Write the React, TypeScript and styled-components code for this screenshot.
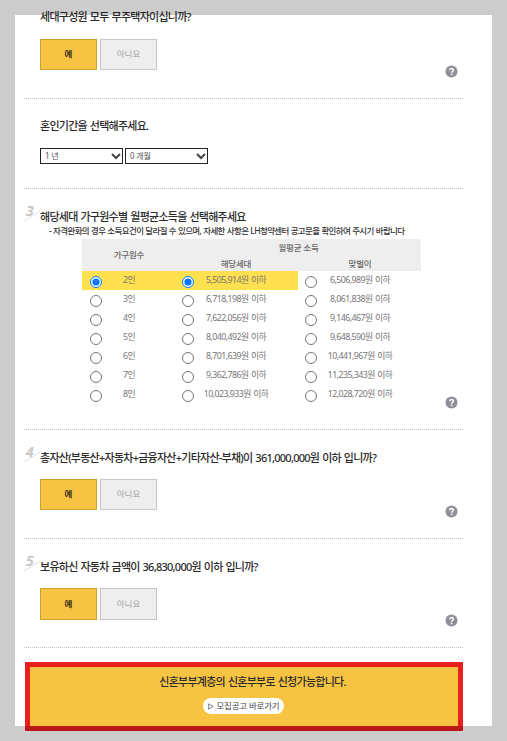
import React, { useState } from "react";
import styled, { createGlobalStyle } from "styled-components";

const GlobalStyle = createGlobalStyle`
  * { box-sizing: border-box; }
  body { margin: 0; background: #fff; }
  button, select, input { font: inherit; margin: 0; }
`;

const Page = styled.main`
  position: relative;
  width: 507px;
  height: 741px;
  overflow: hidden;
  background: #fff;
  padding: 0 44px 0 24px;
  font-family: "Noto Sans", "Noto Sans CJK KR", sans-serif;
  color: #222;
`;

/* Translucent frame laid over the edges of the page. */
const Frame = styled.div`
  position: absolute;
  inset: 0;
  border: 15px solid rgba(0, 0, 0, 0.2);
  pointer-events: none;
`;

const Section = styled.section<{ $height: number; $top: number }>`
  display: flex;
  justify-content: space-between;
  height: ${(p) => p.$height}px;
  padding: ${(p) => p.$top}px 5px 0 0;
  border-bottom: 1px dotted #bebebe;
`;

const Marker = styled.div`
  flex: none;
  width: 16px;
`;

const MarkerSvg = styled.svg`
  display: block;
  margin-top: -5px;
  overflow: visible;
`;

const Content = styled.div`
  flex: 1;
  min-width: 0;
`;

const Title = styled.h2`
  margin: 0;
  height: 16px;
  padding-top: 1px;
  line-height: 16px;
  font-size: 11px;
  font-weight: 500;
  letter-spacing: -0.74px;
  word-spacing: 0.8px;
  white-space: nowrap;
  color: #2a2a2a;
`;

const Note = styled.p`
  margin: 0 0 0 9px;
  height: 15px;
  line-height: 14px;
  font-size: 8.5px;
  font-weight: 500;
  letter-spacing: -0.62px;
  word-spacing: 0.35px;
  white-space: nowrap;
  color: #333;
`;

const Answers = styled.div<{ $gap: number }>`
  display: flex;
  gap: 3px;
  margin-top: ${(p) => p.$gap}px;
`;

const Answer = styled.button<{ $on: boolean; $height?: number }>`
  width: 57px;
  height: ${(p) => p.$height ?? 31}px;
  padding: 0 0 1px;
  border: 1px solid ${(p) => (p.$on ? "#c9a22c" : "#c6c6c6")};
  background: ${(p) => (p.$on ? "#f6c342" : "#eee")};
  color: ${(p) => (p.$on ? "#3b2f12" : "#a2a2a2")};
  font-size: 8.5px;
  line-height: 12px;
  font-weight: ${(p) => (p.$on ? 700 : 400)};
`;

const Selects = styled.div`
  display: flex;
  gap: 2px;
  margin-top: 15px;
`;

const SelectBox = styled.button`
  display: flex;
  align-items: center;
  justify-content: space-between;
  width: 83px;
  height: 16px;
  padding: 0 1px 1px 4px;
  border: 1px solid #222;
  background: #fff;
  font-size: 8px;
  line-height: 12px;
  letter-spacing: -0.2px;
  color: #555;
`;

const HelpButton = styled.button`
  align-self: flex-end;
  flex: none;
  display: block;
  width: 13px;
  height: 13px;
  margin-bottom: 20px;
  padding: 0;
  border: 0;
  background: none;
`;

const HelpIcon = styled.svg`
  display: block;
`;

const Table = styled.div`
  width: 339px;
  margin-left: 42px;
`;

const Head = styled.div`
  display: grid;
  grid-template-columns: 92px 124px 123px;
  grid-template-rows: 16px 16px;
  background: #eee;
  color: #666;
  font-size: 8.5px;
  font-weight: 500;
  letter-spacing: -0.2px;
`;

const HeadCell = styled.div<{ $kind: "size" | "income" | "single" | "dual" }>`
  display: flex;
  align-items: center;
  justify-content: center;
  white-space: nowrap;
  line-height: 14px;
  ${(p) =>
    ({
      size: "grid-row: span 2; padding-left: 2px;",
      income: "grid-column: 2 / 4; padding: 1px 0 0 2px;",
      single: "padding: 1px 0 0 0;",
      dual: "padding: 1px 0 0 1px;",
    })[p.$kind]}
`;

const Row = styled.div`
  display: grid;
  grid-template-columns: 92px 124px 123px;
  height: 19px;
`;

const Cell = styled.label<{ $on: boolean }>`
  display: flex;
  align-items: center;
  background: ${(p) => (p.$on ? "#ffe04f" : "transparent")};
`;

const Radio = styled.input<{ $last?: boolean }>`
  && {
    flex: none;
    width: 12px;
    height: 12px;
    margin: 2px ${(p) => (p.$last ? 9 : 8)}px 0 ${(p) => (p.$last ? 7 : 8)}px;
  }
`;

const CellText = styled.span<{ $width: number }>`
  width: ${(p) => p.$width}px;
  padding-bottom: 1px;
  text-align: center;
  white-space: nowrap;
  font-size: 8.8px;
  line-height: 14px;
  letter-spacing: -0.55px;
  word-spacing: 0.8px;
  color: #757575;
`;

const Result = styled.div`
  display: flex;
  flex-direction: column;
  align-items: center;
  width: 438px;
  height: 69px;
  margin: 14px 0 0 1px;
  padding-top: 6px;
  border: 5px solid #e8201e;
  background: #f6c342;
`;

const ResultTitle = styled(Title)`
  margin-left: 17px;
`;

const Shortcut = styled.button`
  display: flex;
  align-items: center;
  justify-content: center;
  gap: 3px;
  width: 81px;
  height: 16px;
  margin: 9px 1px 0 0;
  padding: 0;
  border: 0;
  border-radius: 8px;
  background: #fff;
  color: #444;
  font-size: 8.5px;
  line-height: 14px;
  letter-spacing: -0.2px;
  white-space: nowrap;
`;

const Help = () => (
  <HelpButton aria-label="도움말">
    <HelpIcon width="13" height="13" viewBox="0 0 13 13">
      <circle cx="6.5" cy="6.5" r="6" fill="#8f8f9a" />
      <path
        d="M4.7 5.2C4.7 2.9 8.4 2.9 8.4 5.1C8.4 6.4 6.6 6.3 6.6 7.7"
        fill="none"
        stroke="#fff"
        strokeWidth="1.4"
      />
      <circle cx="6.6" cy="9.4" r="0.85" fill="#fff" />
    </HelpIcon>
  </HelpButton>
);

const StepMarker = ({ step }: { step?: number }) => (
  <Marker>
    {step && (
      <MarkerSvg width="16" height="20" viewBox="0 0 16 20">
        <path d="M0 18L16 8" stroke="#dcdcdc" strokeWidth="0.9" />
        <text x="1.8" y="12.5" fontSize="14.5" fontWeight="700" fontStyle="italic" fill="#c8c8c8">
          {step}
        </text>
      </MarkerSvg>
    )}
  </Marker>
);

const YesNo = ({ gap, height }: { gap: number; height?: number }) => {
  const [yes, setYes] = useState(true);
  return (
    <Answers $gap={gap}>
      <Answer $on={yes} $height={height} onClick={() => setYes(true)}>예</Answer>
      <Answer $on={!yes} $height={height} onClick={() => setYes(false)}>아니요</Answer>
    </Answers>
  );
};

const Picker = ({ value }: { value: string }) => (
  <SelectBox>
    {value}
    <svg width="10" height="8" viewBox="0 0 10 8">
      <path d="M1 2L5 6L9 2" fill="none" stroke="#444" strokeWidth="2" />
    </svg>
  </SelectBox>
);

const incomes = [
  ["2인", "5,505,914원 이하", "6,506,989원 이하"],
  ["3인", "6,718,198원 이하", "8,061,838원 이하"],
  ["4인", "7,622,056원 이하", "9,146,467원 이하"],
  ["5인", "8,040,492원 이하", "9,648,590원 이하"],
  ["6인", "8,701,639원 이하", "10,441,967원 이하"],
  ["7인", "9,362,786원 이하", "11,235,343원 이하"],
  ["8인", "10,023,933원 이하", "12,028,720원 이하"],
];

const IncomeTable = () => {
  const [size, setSize] = useState(0);
  const [income, setIncome] = useState("0-1");
  return (
    <Table>
      <Head>
        <HeadCell $kind="size">가구원수</HeadCell>
        <HeadCell $kind="income">월평균 소득</HeadCell>
        <HeadCell $kind="single">해당세대</HeadCell>
        <HeadCell $kind="dual">맞벌이</HeadCell>
      </Head>
      {incomes.map(([people, ...amounts], row) => (
        <Row key={people}>
          <Cell $on={size === row}>
            <Radio type="radio" name="size" checked={size === row} onChange={() => setSize(row)} />
            <CellText $width={38}>{people}</CellText>
          </Cell>
          {amounts.map((amount, i) => {
            const id = `${row}-${i + 1}`;
            return (
              <Cell key={id} $on={income === id}>
                <Radio
                  type="radio"
                  name="income"
                  $last={i === 1}
                  checked={income === id}
                  onChange={() => setIncome(id)}
                />
                <CellText $width={68}>{amount}</CellText>
              </Cell>
            );
          })}
        </Row>
      ))}
    </Table>
  );
};

export default function App() {
  return (
    <>
      <GlobalStyle />
      <Page>
        <Section $height={99} $top={8}>
          <StepMarker />
          <Content>
            <Title>세대구성원 모두 무주택자이십니까?</Title>
            <YesNo gap={15} />
          </Content>
          <Help />
        </Section>
        <Section $height={90} $top={18}>
          <StepMarker />
          <Content>
            <Title>혼인기간을 선택해주세요.</Title>
            <Selects>
              <Picker value="1 년" />
              <Picker value="0 개월" />
            </Selects>
          </Content>
        </Section>
        <Section $height={241} $top={19}>
          <StepMarker step={3} />
          <Content>
            <Title>해당세대 가구원수별 월평균소득을 선택해주세요</Title>
            <Note>- 자격완화의 경우 소득요건이 달라질 수 있으며, 자세한 사항은 LH청약센터 공고문을 확인하여 주시기 바랍니다</Note>
            <IncomeTable />
          </Content>
          <Help />
        </Section>
        <Section $height={109} $top={19}>
          <StepMarker step={4} />
          <Content>
            <Title>총자산(부동산+자동차+금융자산+기타자산-부채)이 361,000,000원 이하 입니까?</Title>
            <YesNo gap={14} />
          </Content>
          <Help />
        </Section>
        <Section $height={109} $top={19}>
          <StepMarker step={5} />
          <Content>
            <Title>보유하신 자동차 금액이 36,830,000원 이하 입니까?</Title>
            <YesNo gap={14} height={32} />
          </Content>
          <Help />
        </Section>
        <Result>
          <ResultTitle>신혼부부계층의 신혼부부로 신청가능합니다.</ResultTitle>
          <Shortcut>
            <svg width="6" height="7" viewBox="0 0 6 7">
              <path d="M0.6 0.8L5.2 3.5L0.6 6.2Z" fill="none" stroke="#555" strokeWidth="0.7" />
            </svg>
            모집공고 바로가기
          </Shortcut>
        </Result>
        <Frame />
      </Page>
    </>
  );
}
